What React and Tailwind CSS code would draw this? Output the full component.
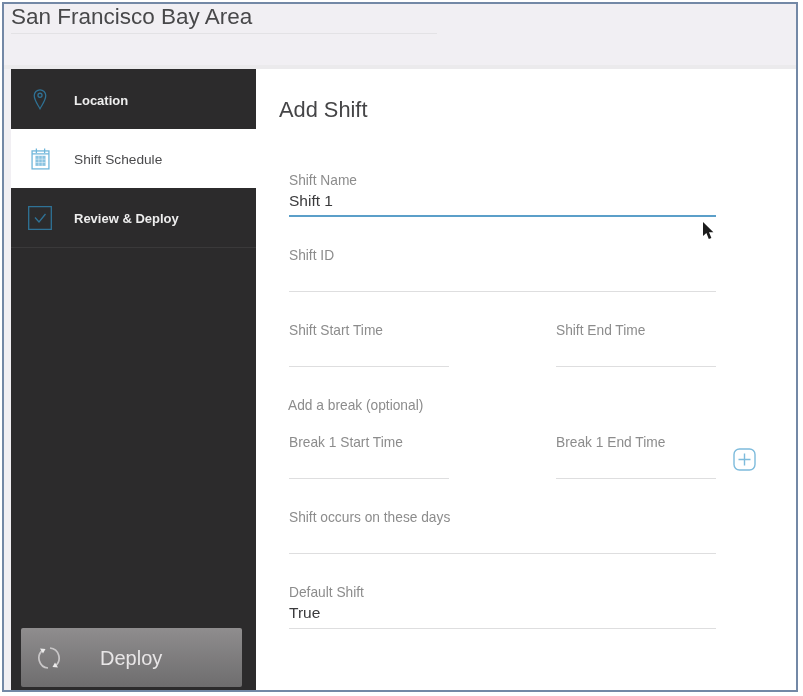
import React from 'react';

const Field = ({ label, value, active, className = '' }) => (
  <div className={`flex flex-col ${className}`}>
    <span className="h-5 pt-[1px] text-[13.75px] leading-5 text-[#8c8c8c]">{label}</span>
    <span className="h-6 text-[15.5px] leading-[22px] text-[#3a3a3c]">{value}</span>
    <div className={active ? 'mt-[1px] h-[2px] bg-[#5b9fc9]' : 'mt-[2px] h-[1px] bg-[#dededf]'} />
  </div>
);

const PinIcon = () => (
  <svg width="16" height="22" viewBox="0 0 18 26" fill="none" stroke="#2f7296" strokeWidth="1.5">
    <path d="M9 24.5C6 19 2.2 14.5 2.2 9a6.8 6.8 0 0 1 13.6 0c0 5.5-3.8 10-6.8 15.5z" />
    <circle cx="9" cy="8.6" r="2.4" />
  </svg>
);

const CalendarIcon = () => (
  <svg width="19" height="22" viewBox="0 0 20 24" fill="none" stroke="#6fb6da" strokeWidth="1.4">
    <rect x="0.8" y="3.2" width="18.4" height="19.6" />
    <path d="M0.8 6.5h18.4M5.5 0.5v5M14.5 0.5v5" />
    <rect x="4.500" y="8.500" width="11" height="11" fill="#8ac3e0" stroke="none" />
    <path d="M4.500 12.200h11M4.500 15.800h11M8.200 8.500v11M11.800 8.500v11" stroke="#ffffff" strokeWidth="0.5" />
  </svg>
);

const CheckIcon = () => (
  <svg width="24" height="24" viewBox="0 0 24 24" fill="none" stroke="#2f7296" strokeWidth="1.3">
    <path d="M23.3 0.7v22.6H0.7V0.7z" />
    <path d="M7 11.5l4 4.5 6.5-8" />
  </svg>
);

const RefreshIcon = () => (
  <svg width="24" height="24" viewBox="0 0 24 24" fill="none" stroke="#c9c7c8" strokeWidth="1.7">
    <path d="M6 4A10 10 0 0 0 11 22" />
    <path d="M13 2A10 10 0 0 1 18 20" />
    <path d="M3 2.500l5.500 0.500-2.500 4.500z" fill="#ecebeb" stroke="none" />
    <path d="M21 21.500l-5.500-0.500 2.500-4.500z" fill="#ecebeb" stroke="none" />
  </svg>
);

const PlusIcon = () => (
  <svg width="23" height="23" viewBox="0 0 23 23" fill="none" stroke="#7dbbdc" strokeWidth="1.4">
    <rect x="1" y="1" width="21" height="21" rx="5.500" />
    <path d="M11.500 5.500v12M5.500 11.500h12" />
  </svg>
);

const CursorIcon = () => (
  <svg width="13" height="20" viewBox="0 0 13 20" fill="#1c1c1c">
    <path d="M1 1v14l3.400-3 2.400 6 2.600-1-2.400-5.800h4.400z" />
  </svg>
);

const navItems = [
  { name: 'Location', icon: PinIcon, height: 'h-[60px]' },
  { name: 'Shift Schedule', icon: CalendarIcon, height: 'h-[59px]', active: true },
  { name: 'Review & Deploy', icon: CheckIcon, height: 'h-[60px]', divider: true },
];

export default function App() {
  return (
    <div className="h-[696px] w-[803px] overflow-hidden bg-white font-['Liberation_Sans',sans-serif]">
      <div className="ml-[2px] mt-[2px] flex h-[690px] w-[796px] flex-col border-2 border-[#7388a6]">
        <div className="flex min-h-0 flex-1 flex-col blur-[0.4px]">
          {/* Header */}
          <div className="h-[65px] shrink-0 bg-[#f1eff3] pl-[7px]">
            <h1 className="h-[29px] text-[22.5px] font-normal leading-[25px] text-[#48484a]">San Francisco Bay Area</h1>
            <div className="h-[1px] w-[426px] bg-[#e3e2e5]" />
            <div className="-ml-[7px] mt-[31px] h-[4px] bg-[#ebeaec]" />
          </div>

          <div className="flex min-h-0 flex-1">
            {/* Sidebar */}
            <div className="w-[7px] shrink-0 bg-[#f1eff3]" />
            <div className="flex w-[245px] shrink-0 flex-col bg-[#2c2b2c]">
              {navItems.map((item) => (
                <div
                  key={item.name}
                  className={`flex ${item.height} items-center ${item.active ? 'bg-white text-[#4a4a4c]' : 'text-[#eeeeee]'} ${item.divider ? 'border-b border-[#3a393a]' : ''}`}
                >
                  <div className="flex w-[58px] shrink-0 justify-center">
                    <item.icon />
                  </div>
                  <span className={`ml-[5px] pt-[3px] ${item.active ? 'text-[13.7px]' : 'text-[13px] font-bold'}`}>{item.name}</span>
                </div>
              ))}
              <div className="mt-auto pb-[3px] pl-[10px] pr-[14px]">
                <div className="flex h-[59px] items-center rounded-[2px] bg-gradient-to-b from-[#8f8d8e] to-[#6e6d6e] pl-[16px]">
                  <RefreshIcon />
                  <span className="ml-[39px] text-[20px] text-[#e8e6e7]">Deploy</span>
                </div>
              </div>
            </div>

            {/* Form */}
            <div className="relative flex-1 bg-white pl-[23px] pt-[26px]">
              <h2 className="h-[30px] text-[21.8px] font-normal leading-[30px] text-[#454547]">Add Shift</h2>
              <div className="ml-[10px] mt-[45px] flex w-[427px] flex-col">
                <Field label="Shift Name" value="Shift 1" active />
                <Field label="Shift ID" className="mt-[28px]" />
                <div className="mt-[28px] flex justify-between">
                  <Field label="Shift Start Time" className="w-[160px]" />
                  <Field label="Shift End Time" className="w-[160px]" />
                </div>
                <div className="-ml-[1px] mt-[28px] h-5 pt-[1px] text-[13.75px] leading-5 text-[#8c8c8c]">Add a break (optional)</div>
                <div className="mt-[17px] flex w-[479px]">
                  <Field label="Break 1 Start Time" className="w-[160px]" />
                  <Field label="Break 1 End Time" className="ml-[107px] w-[160px]" />
                  <div className="ml-[17px] self-start pt-[16px]">
                    <PlusIcon />
                  </div>
                </div>
                <Field label="Shift occurs on these days" className="mt-[28px]" />
                <Field label="Default Shift" value="True" className="mt-[28px]" />
              </div>
              {/* mouse pointer */}
              <div className="absolute left-[446px] top-[152px]">
                <CursorIcon />
              </div>
            </div>
          </div>
        </div>
      </div>
    </div>
  );
}
